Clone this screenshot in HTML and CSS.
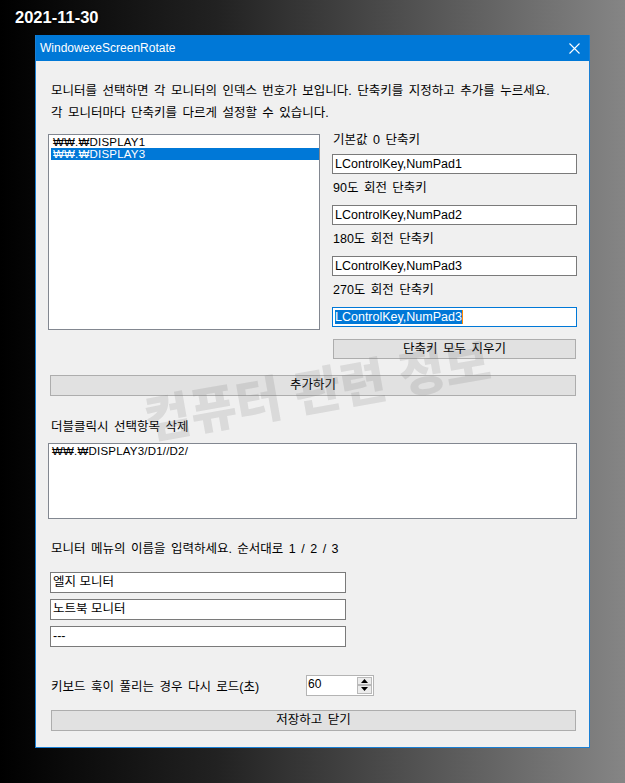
FILE: index.html
```html
<!DOCTYPE html>
<html lang="ko">
<head>
<meta charset="utf-8">
<link rel="stylesheet" href="styles.css">
</head>
<body>
<div class="date">2021-11-30</div>
<div class="window">
  <div class="titlebar">
    <span class="title">WindowexeScreenRotate</span>
    <svg class="close" width="11" height="11" viewBox="0 0 11 11"><path d="M0.5 0.5 L10.5 10.5 M10.5 0.5 L0.5 10.5" stroke="#fff" stroke-width="1.1" fill="none"/></svg>
  </div>
  <div class="client">
    <div class="intro">
      <div>모니터를 선택하면 각 모니터의 인덱스 번호가 보입니다. 단축키를 지정하고 추가를 누르세요.</div>
      <div>각 모니터마다 단축키를 다르게 설정할 수 있습니다.</div>
    </div>
    <div class="row">
      <div class="listbox">
        <div class="item">₩₩.₩DISPLAY1</div>
        <div class="item selected">₩₩.₩DISPLAY3</div>
      </div>
      <div class="keys">
        <div class="klabel first">기본값 0 단축키</div>
        <div class="textbox">LControlKey,NumPad1</div>
        <div class="klabel">90도 회전 단축키</div>
        <div class="textbox">LControlKey,NumPad2</div>
        <div class="klabel">180도 회전 단축키</div>
        <div class="textbox">LControlKey,NumPad3</div>
        <div class="klabel">270도 회전 단축키</div>
        <div class="textbox focused"><span class="sel">LControlKey,NumPad3</span><span class="caret"></span></div>
        <div class="button clear">단축키 모두 지우기</div>
      </div>
    </div>
    <div class="button add">추가하기</div>
    <div class="label dbl">더블클릭시 선택항목 삭제</div>
    <div class="listbox2"><div class="item">₩₩.₩DISPLAY3/D1//D2/</div></div>
    <div class="label names-label">모니터 메뉴의 이름을 입력하세요. 순서대로 1 / 2 / 3</div>
    <div class="names">
      <div class="textbox">엘지 모니터</div>
      <div class="textbox">노트북 모니터</div>
      <div class="textbox">---</div>
    </div>
    <div class="reload">
      <span class="reload-label">키보드 훅이 풀리는 경우 다시 로드(초)</span>
      <div class="spin">
        <span class="spin-value">60</span>
        <div class="spin-btns">
          <div class="spin-btn"><svg width="7" height="4" viewBox="0 0 7 4"><path d="M0 4 L3.5 0 L7 4 Z" fill="#000"/></svg></div>
          <div class="spin-btn"><svg width="7" height="4" viewBox="0 0 7 4"><path d="M0 0 L7 0 L3.5 4 Z" fill="#000"/></svg></div>
        </div>
      </div>
    </div>
    <div class="button save">저장하고 닫기</div>
  </div>
  <div class="watermark">컴퓨터 관련 정보</div>
</div>
</body>
</html>
```

FILE: styles.css
```css
html, body {
  margin: 0;
  padding: 0;
}
body {
  width: 625px;
  height: 783px;
  overflow: hidden;
  background: linear-gradient(to right, #000000 0%, #222222 35%, #858585 100%);
  font-family: "Liberation Sans", "Noto Sans CJK KR", sans-serif;
  font-size: 12px;
  color: #000;
}
.date {
  height: 35px;
  line-height: 34px;
  padding-left: 15px;
  color: #fff;
  font-weight: bold;
  font-size: 16.5px;
  font-family: "Liberation Sans", sans-serif;
  text-shadow: 0 0 2px #000;
}
.window {
  position: relative;
  box-sizing: border-box;
  margin-left: 35px;
  width: 555px;
  height: 713px;
  border: 1px solid #1a7fd4;
  border-top: none;
  background: #f0f0f0;
  overflow: hidden;
}
.titlebar {
  height: 26px;
  background: #0078d7;
  display: flex;
  align-items: center;
  padding-left: 4px;
  color: #fff;
  font-family: "Liberation Sans", sans-serif;
  font-size: 12px;
}
.close {
  margin-left: auto;
  margin-right: 9px;
}
.client {
  padding: 19px 0 0 0;
  font-family: "Liberation Sans", "Noto Sans CJK KR", sans-serif;
  font-size: 12.5px;
  word-spacing: 2px;
}
.intro {
  padding-left: 15px;
  line-height: 22px;
  white-space: nowrap;
}
.row {
  display: flex;
  margin-top: 10px;
  padding-left: 12px;
  align-items: flex-start;
}
.listbox {
  box-sizing: border-box;
  width: 272px;
  height: 196px;
  border: 1px solid #828790;
  background: #fff;
  padding: 1px 0 0 2px;
}
.item {
  height: 12px;
  line-height: 12px;
  padding-left: 2px;
  font-size: 11.5px;
  letter-spacing: 0.2px;
  word-spacing: 0;
  white-space: nowrap;
}
.item.selected {
  background: #0078d7;
  color: #fff;
}
.keys {
  width: 245px;
  margin-left: 12px;
  margin-top: -1px;
  display: flex;
  flex-direction: column;
}
.klabel {
  height: 14px;
  line-height: 14px;
  padding-left: 1px;
  margin: 7px 0 10px;
  white-space: nowrap;
}
.klabel.first {
  margin: 0 0 7px;
}
.textbox {
  box-sizing: border-box;
  height: 20px;
  border: 1px solid #7a7a7a;
  background: #fff;
  padding-left: 2px;
  line-height: 18px;
  font-size: 12.5px;
  word-spacing: 0;
  white-space: nowrap;
}
.textbox.focused {
  border-color: #0078d7;
  display: flex;
  align-items: center;
}
.sel {
  background: #0078d7;
  color: #fff;
  line-height: 14px;
}
.caret {
  display: inline-block;
  width: 1px;
  height: 14px;
  background: #ff8a00;
}
.button {
  box-sizing: border-box;
  height: 21px;
  line-height: 19px;
  border: 1px solid #adadad;
  background: #e1e1e1;
  text-align: center;
  white-space: nowrap;
}
.button.clear {
  margin: 12px 0 0 1px;
  width: 243px;
  height: 20px;
  line-height: 18px;
}
.button.add {
  margin: 16px 0 0 14px;
  width: 526px;
}
.label {
  height: 14px;
  line-height: 14px;
  padding-left: 15px;
  white-space: nowrap;
}
.label.dbl {
  margin-top: 24px;
}
.listbox2 {
  box-sizing: border-box;
  margin: 9px 0 0 12px;
  width: 529px;
  height: 76px;
  border: 1px solid #828790;
  background: #fff;
  padding: 1px 0 0 1px;
}
.label.names-label {
  margin-top: 23px;
}
.names {
  margin: 16px 0 0 14px;
  width: 296px;
  display: flex;
  flex-direction: column;
  gap: 6px;
}
.names .textbox {
  height: 21px;
  line-height: 19px;
}
.reload {
  margin-top: 28px;
  height: 20px;
  display: flex;
  align-items: center;
  padding-left: 15px;
}
.reload-label {
  width: 255px;
  white-space: nowrap;
}
.spin {
  box-sizing: border-box;
  width: 68px;
  height: 21px;
  border: 1px solid #b4b4b4;
  background: #fff;
  display: flex;
  align-items: stretch;
}
.spin-value {
  flex: 1;
  padding-left: 1px;
  line-height: 16px;
  font-size: 12px;
}
.spin-btns {
  width: 15px;
  display: flex;
  flex-direction: column;
  padding: 1px 1px 1px 0;
}
.spin-btn {
  box-sizing: border-box;
  flex: 1;
  border: 1px solid #b9b9b9;
  background: #ececec;
  display: flex;
  align-items: center;
  justify-content: center;
}
.button.save {
  margin: 15px 0 0 15px;
  width: 525px;
}
.watermark {
  position: absolute;
  left: 281px;
  top: 352px;
  transform: translate(-50%, -50%) rotate(-10deg);
  white-space: nowrap;
  font-family: "Noto Sans CJK KR", sans-serif;
  font-weight: 900;
  font-size: 50px;
  color: rgba(120, 120, 120, 0.19);
  pointer-events: none;
}
```
